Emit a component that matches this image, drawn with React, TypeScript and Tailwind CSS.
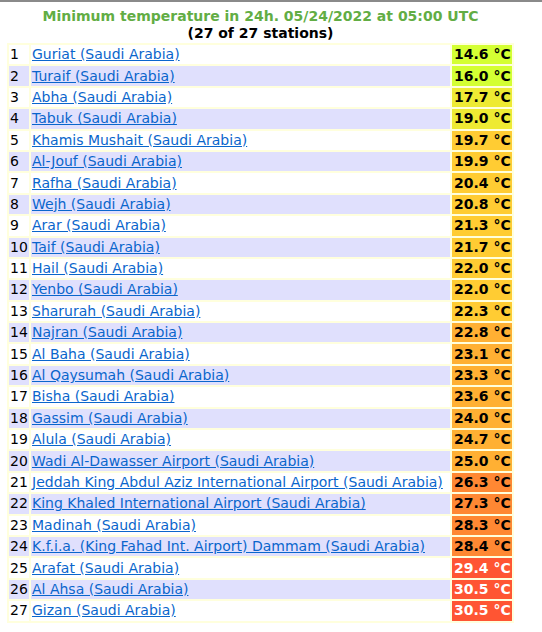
import React from "react";

type Row = { name: string; temp: string; bg: string; light?: boolean };

const rows: Row[] = [
  { name: "Guriat (Saudi Arabia)", temp: "14.6", bg: "bg-[#d4ff33]" },
  { name: "Turaif (Saudi Arabia)", temp: "16.0", bg: "bg-[#d4ff33]" },
  { name: "Abha (Saudi Arabia)", temp: "17.7", bg: "bg-[#eeea33]" },
  { name: "Tabuk (Saudi Arabia)", temp: "19.0", bg: "bg-[#eeea33]" },
  { name: "Khamis Mushait (Saudi Arabia)", temp: "19.7", bg: "bg-[#ffcc33]" },
  { name: "Al-Jouf (Saudi Arabia)", temp: "19.9", bg: "bg-[#ffcc33]" },
  { name: "Rafha (Saudi Arabia)", temp: "20.4", bg: "bg-[#ffcc33]" },
  { name: "Wejh (Saudi Arabia)", temp: "20.8", bg: "bg-[#ffcc33]" },
  { name: "Arar (Saudi Arabia)", temp: "21.3", bg: "bg-[#ffcc33]" },
  { name: "Taif (Saudi Arabia)", temp: "21.7", bg: "bg-[#ffcc33]" },
  { name: "Hail (Saudi Arabia)", temp: "22.0", bg: "bg-[#ffcc33]" },
  { name: "Yenbo (Saudi Arabia)", temp: "22.0", bg: "bg-[#ffcc33]" },
  { name: "Sharurah (Saudi Arabia)", temp: "22.3", bg: "bg-[#ffcc33]" },
  { name: "Najran (Saudi Arabia)", temp: "22.8", bg: "bg-[#ffb033]" },
  { name: "Al Baha (Saudi Arabia)", temp: "23.1", bg: "bg-[#ffb033]" },
  { name: "Al Qaysumah (Saudi Arabia)", temp: "23.3", bg: "bg-[#ffb033]" },
  { name: "Bisha (Saudi Arabia)", temp: "23.6", bg: "bg-[#ffb033]" },
  { name: "Gassim (Saudi Arabia)", temp: "24.0", bg: "bg-[#ffb033]" },
  { name: "Alula (Saudi Arabia)", temp: "24.7", bg: "bg-[#ffb033]" },
  { name: "Wadi Al-Dawasser Airport (Saudi Arabia)", temp: "25.0", bg: "bg-[#ffb033]" },
  { name: "Jeddah King Abdul Aziz International Airport (Saudi Arabia)", temp: "26.3", bg: "bg-[#ff8833]" },
  { name: "King Khaled International Airport (Saudi Arabia)", temp: "27.3", bg: "bg-[#ff8833]" },
  { name: "Madinah (Saudi Arabia)", temp: "28.3", bg: "bg-[#ff8833]" },
  { name: "K.f.i.a. (King Fahad Int. Airport) Dammam (Saudi Arabia)", temp: "28.4", bg: "bg-[#ff8833]" },
  { name: "Arafat (Saudi Arabia)", temp: "29.4", bg: "bg-[#ff5533]", light: true },
  { name: "Al Ahsa (Saudi Arabia)", temp: "30.5", bg: "bg-[#ff5533]", light: true },
  { name: "Gizan (Saudi Arabia)", temp: "30.5", bg: "bg-[#ff5533]", light: true },
];

export default function App() {
  return (
    <div className="min-h-[632px] border-t-2 border-[#8a8a8a] bg-white font-['DejaVu_Sans',Verdana,sans-serif]">
      <div className="ml-[7px] w-[507px] pt-[6px]">
        {/* heading */}
        <div className="text-center text-[14px] font-bold leading-[17px] text-[#62ad44]">
          Minimum temperature in 24h. 05/24/2022 at 05:00 UTC
        </div>
        <div className="text-center text-[14px] font-bold leading-[17px] text-black">
          (27 of 27 stations)
        </div>

        {/* stations */}
        <table className="mt-[1px] w-[507px] table-fixed border-separate border-spacing-[2px] bg-[#ffffdd] text-[14px]">
          <colgroup>
            <col className="w-[20px]" />
            <col />
            <col className="w-[60px]" />
          </colgroup>
          <tbody>
            {rows.map((r, i) => (
              <tr key={i} className={i % 2 === 1 ? "bg-[#e0e0fd]" : "bg-white"}>
                <td className="h-[19.4px] p-0 pl-[1px] align-middle leading-[19px] whitespace-nowrap text-black">
                  {i + 1}
                </td>
                <td className="h-[19.4px] p-0 pl-[1px] align-middle leading-[19px] whitespace-nowrap">
                  <a href="#" className="text-[#0a66cc] underline">
                    {r.name}
                  </a>
                </td>
                <td
                  className={`h-[19.4px] p-0 pl-[2px] align-middle text-[14px] font-bold leading-[19px] whitespace-nowrap ${r.bg} ${
                    r.light ? "text-white" : "text-black"
                  }`}
                >
                  {r.temp} °C
                </td>
              </tr>
            ))}
          </tbody>
        </table>
      </div>
    </div>
  );
}
